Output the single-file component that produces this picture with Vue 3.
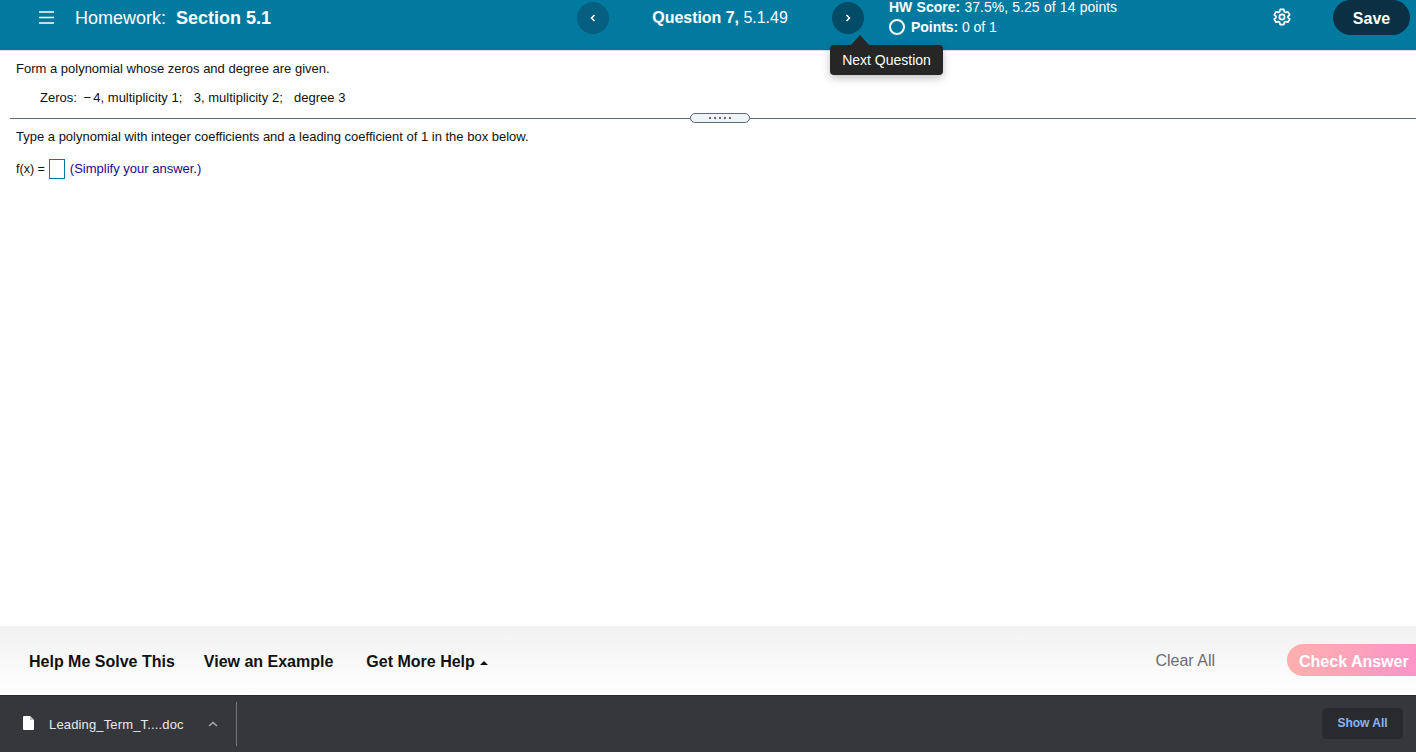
<template>
  <div class="page">
    <header class="topbar">
      <div class="title-area">
        <svg class="menu-icon" width="15" height="13" viewBox="0 0 15 13">
          <path d="M0 1h15M0 6.5h15M0 12h15" stroke="#fff" stroke-width="1.4" fill="none" />
        </svg>
        <span class="hw-title">Homework: <b>Section 5.1</b></span>
      </div>
      <div class="question-nav">
        <button class="nav-btn prev">
          <svg width="6" height="8" viewBox="0 0 6 8"><path d="M4.5 1 1.5 4l3 3" stroke="#fff" stroke-width="1.5" fill="none" /></svg>
        </button>
        <span class="question-label"><b>Question 7,</b> 5.1.49</span>
        <button class="nav-btn next">
          <svg width="6" height="8" viewBox="0 0 6 8"><path d="M1.5 1l3 3-3 3" stroke="#fff" stroke-width="1.5" fill="none" /></svg>
        </button>
      </div>
      <div class="score">
        <div class="score-line"><b>HW Score:</b> 37.5%, 5.25 of 14 points</div>
        <div class="points-line"><span class="ring"></span><span><b>Points:</b> 0 of 1</span></div>
      </div>
      <svg class="gear" width="18" height="18" viewBox="0 0 20 20" fill="none" stroke="#fff" stroke-width="1.9" stroke-linejoin="round">
        <path d="M8 1.6h4l.7 2.5 1.4.8 2.5-.7 2 3.4-1.9 1.8v1.2l1.9 1.8-2 3.4-2.5-.7-1.4.8-.7 2.5H8l-.7-2.5-1.4-.8-2.5.7-2-3.4 1.9-1.8V9.4L1.4 7.6l2-3.4 2.5.7 1.4-.8z" />
        <circle cx="10" cy="10" r="2.9" />
      </svg>
      <button class="save-btn">Save</button>
    </header>

    <div class="tooltip">Next Question</div>

    <main class="content">
      <p class="prompt">Form a polynomial whose zeros and degree are given.</p>
      <p class="zeros">Zeros: <span class="minus">−</span>4, multiplicity 1;&nbsp;&nbsp; 3, multiplicity 2;&nbsp;&nbsp; degree 3</p>
      <div class="divider">
        <div class="handle">
          <i v-for="n in 5" :key="n"></i>
        </div>
      </div>
      <p class="prompt type-line">Type a polynomial with integer coefficients and a leading coefficient of 1 in the box below.</p>
      <div class="answer-row">
        <span>f(x) =</span>
        <span class="answer-box"></span>
        <span class="hint">(Simplify your answer.)</span>
      </div>
    </main>

    <footer class="actions">
      <a class="help first">Help Me Solve This</a>
      <a class="help second">View an Example</a>
      <a class="help third">Get More Help <span class="caret"></span></a>
      <span class="clear">Clear All</span>
      <button class="check-btn">Check Answer</button>
    </footer>

    <div class="downloads">
      <svg class="file-icon" width="11" height="14" viewBox="0 0 11 14">
        <path d="M0 1a1 1 0 0 1 1-1h6l4 4v9a1 1 0 0 1-1 1H1a1 1 0 0 1-1-1z" fill="#fff" />
        <path d="M7 0l4 4H7z" fill="#bfc0c2" />
      </svg>
      <span class="file-name">Leading_Term_T....doc</span>
      <svg class="chevron" width="10" height="6" viewBox="0 0 10 6">
        <path d="M1 5l4-3.6L9 5" stroke="#a9abae" stroke-width="1.5" fill="none" />
      </svg>
      <span class="sep"></span>
      <button class="show-all">Show All</button>
    </div>
  </div>
</template>

<script setup>
</script>

<style>
html, body {
  margin: 0;
  overflow: hidden;
}
</style>

<style scoped>
.page {
  position: relative;
  display: flex;
  flex-direction: column;
  width: 1416px;
  height: 752px;
  background: #fff;
  font-family: "Liberation Sans", Arial, sans-serif;
  color: #111;
}
b {
  font-weight: 700;
}
button {
  font-family: inherit;
  border: none;
  padding: 0;
}
.topbar {
  display: flex;
  align-items: flex-start;
  flex: none;
  height: 51px;
  box-sizing: border-box;
  background: #027a9f;
  border-bottom: 1px solid #d5dee3;
  color: #fff;
}
.title-area {
  display: flex;
  align-items: center;
  width: 577px;
  height: 35px;
  padding-left: 39px;
  box-sizing: border-box;
}
.menu-icon {
  margin-right: 21px;
}
.hw-title {
  font-size: 18px;
  padding-top: 1px;
}
.hw-title b {
  margin-left: 5px;
}
.question-nav {
  display: flex;
  align-items: center;
  width: 287px;
  height: 32px;
  margin-top: 2px;
}
.nav-btn {
  display: flex;
  align-items: center;
  justify-content: center;
  flex: none;
  width: 32px;
  height: 32px;
  border-radius: 50%;
}
.prev {
  background: #055f80;
}
.next {
  background: #024c68;
}
.question-label {
  flex: 1;
  text-align: center;
  font-size: 16px;
  padding-right: 1px;
  letter-spacing: -0.03px;
}
.score {
  width: 385px;
  margin: -2px 0 0 25px;
  font-size: 14px;
}
.score-line {
  line-height: 18px;
  word-spacing: 0.4px;
}
.points-line {
  display: flex;
  align-items: center;
  gap: 6px;
  margin-top: 2px;
  line-height: 18px;
  font-size: 14px;
  letter-spacing: -0.05px;
}
.ring {
  width: 12px;
  height: 12px;
  border: 2px solid #fff;
  border-radius: 50%;
}
.gear {
  flex: none;
  margin-top: 8px;
  margin-left: -1px;
}
.save-btn {
  flex: none;
  width: 77px;
  height: 35px;
  margin-left: 42px;
  padding-top: 2px;
  border-radius: 18px;
  background: #0b3043;
  color: #fff;
  font-size: 16px;
  font-weight: 700;
}
.tooltip {
  position: absolute;
  left: 830px;
  top: 45px;
  width: 113px;
  height: 30px;
  border-radius: 4px;
  background: #262626;
  color: #fff;
  font-size: 14px;
  line-height: 30px;
  text-align: center;
  box-shadow: 0 3px 8px rgba(0, 0, 0, 0.25);
}
.tooltip::before {
  content: "";
  position: absolute;
  left: 21px;
  top: -10px;
  border-left: 9px solid transparent;
  border-right: 9px solid transparent;
  border-bottom: 10px solid #262626;
}
.content {
  flex: 1;
  font-size: 13px;
  padding-top: 10px;
}
p {
  margin: 0;
}
.prompt {
  padding-left: 16px;
  line-height: 15px;
}
.zeros {
  padding-left: 40px;
  margin-top: 14px;
  line-height: 15px;
  word-spacing: 0.15px;
}
.minus {
  margin: 0 2px 0 3px;
}
.divider {
  position: relative;
  height: 1px;
  margin: 13px 0 0 10px;
  background: #5b6b7b;
}
.handle {
  position: absolute;
  left: 680px;
  top: -5px;
  display: flex;
  align-items: center;
  justify-content: center;
  gap: 3px;
  width: 60px;
  height: 10px;
  box-sizing: border-box;
  border: 1px solid #5b6b7b;
  border-radius: 6px;
  background: #f1f4f7;
}
.handle i {
  width: 2px;
  height: 2px;
  background: #5b6b7b;
}
.type-line {
  margin-top: 10px;
}
.answer-row {
  display: flex;
  align-items: center;
  margin: 14px 0 0 16px;
  height: 21px;
  font-size: 12.5px;
}
.answer-box {
  width: 16px;
  height: 20px;
  box-sizing: border-box;
  margin: 0 5px 0 4px;
  border: 1px solid #027a9f;
}
.hint {
  color: #1c0a8c;
  font-size: 13px;
}
.actions {
  display: flex;
  align-items: center;
  flex: none;
  height: 69px;
  box-sizing: border-box;
  background: linear-gradient(#f1f1f1, #fff);
  font-size: 16px;
  font-weight: 700;
  color: #111;
}
.help {
  white-space: nowrap;
  padding-top: 3px;
}
.first {
  margin-left: 29px;
}
.second {
  margin-left: 29px;
}
.third {
  display: flex;
  align-items: center;
  gap: 5px;
  margin-left: 33px;
}
.caret {
  width: 0;
  height: 0;
  margin-top: 2px;
  border-left: 4px solid transparent;
  border-right: 4px solid transparent;
  border-bottom: 4px solid #111;
}
.clear {
  margin-left: auto;
  color: #6b6e72;
  font-weight: 400;
}
.check-btn {
  flex: none;
  width: 129px;
  height: 32px;
  margin-left: 72px;
  margin-bottom: 2px;
  padding-top: 5px;
  border-radius: 16px 0 0 16px;
  background: linear-gradient(100deg, #ffb0ad, #fb94c8);
  color: #fff;
  font-size: 16px;
  font-weight: 700;
  text-align: left;
  padding-left: 12px;
}
.downloads {
  display: flex;
  align-items: center;
  flex: none;
  height: 57px;
  background: #36373b;
  border-top: 1px solid #2a2b2e;
  box-sizing: border-box;
  color: #e8eaed;
}
.file-icon {
  margin-left: 23px;
  margin-top: -2px;
}
.file-name {
  margin-left: 15px;
  font-size: 13px;
  letter-spacing: 0.15px;
}
.chevron {
  margin-left: 24px;
}
.sep {
  width: 1px;
  height: 44px;
  margin-left: 18px;
  background: #77797c;
}
.show-all {
  width: 81px;
  height: 31px;
  margin-left: auto;
  margin-right: 13px;
  margin-top: -2px;
  border: 1px solid #2a2b2f;
  border-radius: 4px;
  background: #292a2e;
  color: #8ab4f8;
  font-size: 12px;
  font-weight: 700;
}
</style>
